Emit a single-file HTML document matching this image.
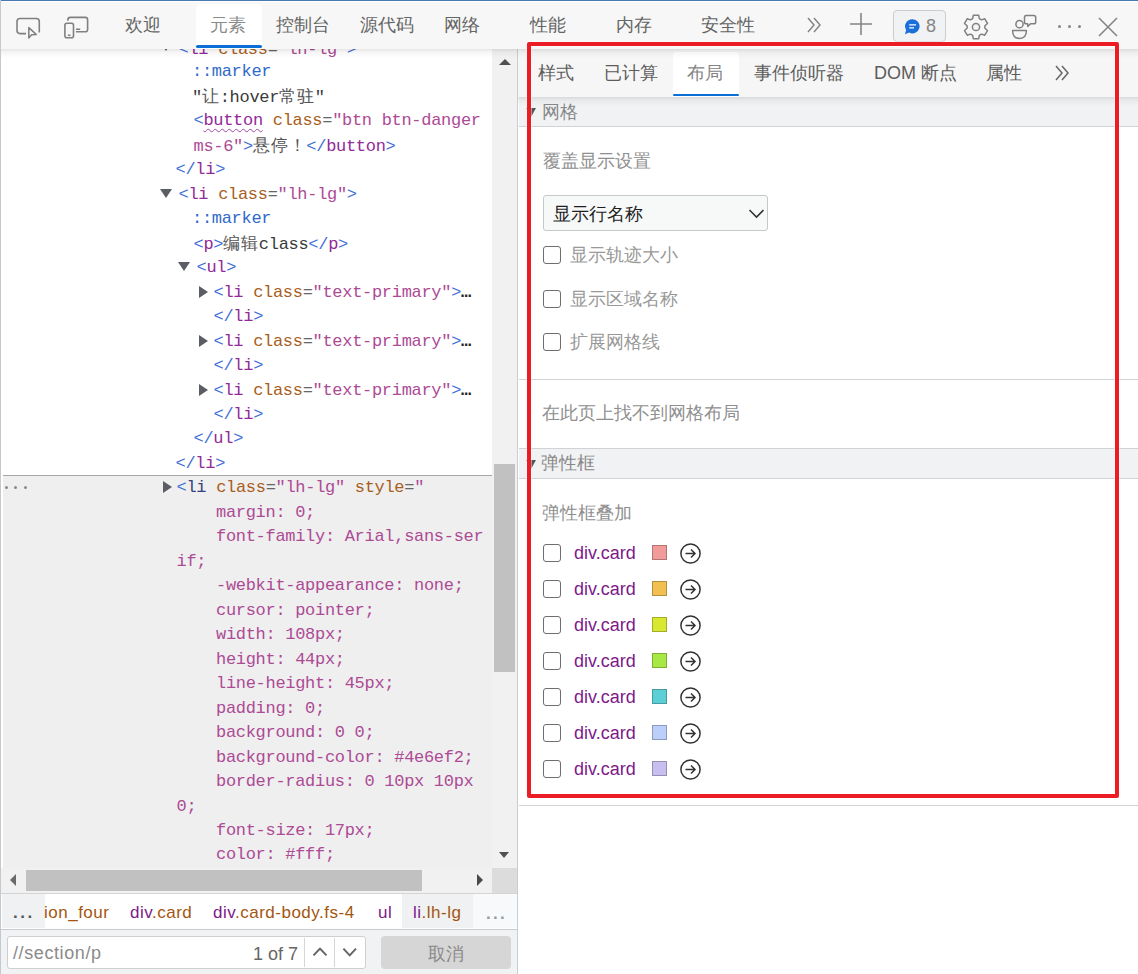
<!DOCTYPE html>
<html><head><meta charset="utf-8">
<style>
html,body{margin:0;padding:0}
body{width:1138px;height:974px;overflow:hidden;position:relative;background:#fff;font-family:"Liberation Sans",sans-serif;color:#333}
.abs{position:absolute}
/* toolbar */
#tb{position:absolute;left:0;top:0;width:1138px;height:49px;background:#f7f7f7;z-index:5}
.shade{position:absolute;height:9px;background:linear-gradient(rgba(0,0,0,0.10),rgba(0,0,0,0.04) 35%,rgba(0,0,0,0))}
#tb .topline{position:absolute;left:0;top:0;width:1138px;height:1px;background:#4a78b2}
#tb .topline2{position:absolute;left:0;top:1px;width:1138px;height:1px;background:#fff}
.ttab{position:absolute;top:13px;font-size:18px;line-height:24px;color:#656565;white-space:nowrap}
#acttab{position:absolute;left:196px;top:4px;width:66px;height:45px;background:#fff;border-radius:5px 5px 0 0}
#acttab .ul{position:absolute;left:0;right:0;bottom:1.5px;height:2.5px;background:#0b6fd6;border-radius:2px}
/* left border */
#lborder{position:absolute;left:0;top:0;width:1px;height:974px;background:#c4c9d1;z-index:6}
/* code */
#code{position:absolute;left:0;top:0;width:492px;height:868px;overflow:hidden;background:#fff}
.row{position:absolute;white-space:pre;font-family:"Liberation Mono",monospace;font-size:17px;letter-spacing:-0.3px;line-height:24px;height:24px;color:#333}
.el{color:#222;font-weight:bold}.b{color:#3f6fd6}.t{color:#922a98}.ts{color:#34427e}.a{color:#a85e1c}.v{color:#ad4a95}.e{color:#666}.x{color:#3a3a3a}.m{color:#3069cc}
.cj{font-family:"Liberation Sans",sans-serif;font-size:17px;letter-spacing:0.8px;color:#555}
.u{text-decoration:underline wavy #a048a8;text-decoration-thickness:1.2px;text-underline-offset:3px}
.tri-d{position:absolute;width:0;height:0;border-left:6px solid transparent;border-right:6px solid transparent;border-top:9px solid #5a5d63}
.tri-r{position:absolute;width:0;height:0;border-top:6px solid transparent;border-bottom:6px solid transparent;border-left:9.5px solid #5a5d63}
#selbg{position:absolute;left:3px;top:476px;width:489px;height:392px;background:#efefef}
#selline{position:absolute;left:3px;top:475px;width:489px;height:1px;background:#a6a6a6}
.dot{position:absolute;width:3px;height:3px;border-radius:50%;background:#8a8a8a}
/* scrollbars */
#vsb{position:absolute;left:492px;top:49px;width:25px;height:819px;background:#f1f1f1}
#vthumb{position:absolute;left:494px;top:464px;width:21px;height:208px;background:#c1c1c1}
#hsb{position:absolute;left:1px;top:868px;width:491px;height:25px;background:#f1f1f1}
#hthumb{position:absolute;left:26px;top:870px;width:396px;height:21px;background:#c1c1c1}
#corner{position:absolute;left:492px;top:868px;width:25px;height:25px;background:#dcdcdc}
/* breadcrumbs */
#bc{position:absolute;left:0;top:893px;width:517px;height:37px;background:#fff;border-top:1px solid #d4d4d4;border-bottom:1px solid #c8cbd0;box-sizing:border-box}
.crumb{position:absolute;top:900.7px;font-size:17px;line-height:24px;white-space:nowrap;letter-spacing:0.5px}
.cp{color:#7d1a8a}.cb{color:#a3560f}
/* search bar */
#sb{position:absolute;left:0;top:930px;width:517px;height:45px;background:#f1f2f4}
#sinput{position:absolute;left:7px;top:936px;width:359px;height:33px;box-sizing:border-box;border:1px solid #cfcfcf;border-radius:3px;background:#fff}
#cancel{position:absolute;left:381px;top:936px;width:130px;height:33px;background:#d6d6d6;border-radius:4px}
/* divider */
#divider{position:absolute;left:517px;top:49px;width:1px;height:925px;background:#c9ccd1}
/* right panel */
#rtabs{position:absolute;left:518px;top:49px;width:620px;height:48px;background:#f6f6f6;z-index:2}
.rtab{position:absolute;z-index:4;top:61px;font-size:18px;line-height:24px;color:#5c5c5c;white-space:nowrap}
#ractt{position:absolute;left:673px;top:52px;width:66px;height:45px;background:#fff;border-radius:4px 4px 0 0;z-index:3}
#ractt .ul{position:absolute;left:0;right:0;bottom:1px;height:2.5px;background:#0b6fd6;border-radius:2px}
.sech{position:absolute;left:519px;width:619px;background:#f1f2f4;box-sizing:border-box}
.sect{position:absolute;font-size:18px;line-height:24px;color:#888;white-space:nowrap}
.gray{position:absolute;font-size:18px;line-height:24px;color:#8f8f8f;white-space:nowrap}
.cb18{position:absolute;width:18px;height:18px;box-sizing:border-box;border:1.6px solid #6e6e6e;border-radius:3px;background:#fff}
.hline{position:absolute;left:519px;width:619px;height:1px;background:#cfd2d6}
#select{position:absolute;left:543px;top:195px;width:225px;height:36px;box-sizing:border-box;border:1px solid #c8c8c8;border-radius:3px;background:#f7f8f8}
.fc{position:absolute;font-size:18px;line-height:24px;color:#7d1a8a;white-space:nowrap}
.sw{position:absolute;width:15px;height:15px;box-sizing:border-box;border:1px solid rgba(0,0,0,0.25)}
.circ{position:absolute;width:21px;height:21px}
/* red box */
#red{position:absolute;left:526px;top:41px;width:594px;height:758px;box-sizing:border-box;border:1px solid rgba(255,255,255,0.45);border-radius:3px;z-index:20}
#red .in{position:absolute;left:0;top:0;right:0;bottom:0;border:4px solid #ec1c24;border-radius:2px}
#red .in2{position:absolute;left:4px;top:4px;right:4px;bottom:4px;border:1px solid rgba(255,255,255,0.45)}
</style></head><body>

<!-- LEFT: code tree -->
<div id="code">
<div id="selbg"></div>
<div id="selline"></div>
<div class="dot" style="left:5px;top:486px"></div>
<div class="dot" style="left:14px;top:486px"></div>
<div class="dot" style="left:24px;top:486px"></div>
<div class="row" style="top:37.50px;left:178.5px"><span class="b">&lt;</span><span class="t">li</span> <span class="a">class</span><span class="e">=</span><span class="v">&quot;lh-lg&quot;</span><span class="b">&gt;</span></div>
<div class="tri-d" style="top:41.80px;left:160px"></div>
<div class="row" style="top:60.47px;left:192px"><span class="m">::marker</span></div>
<div class="row" style="top:84.94px;left:192px"><span class="x">&quot;</span><span class="cj">让</span><span class="x">:hover</span><span class="cj">常驻</span><span class="x">&quot;</span></div>
<div class="row" style="top:109.40px;left:193.5px"><span class="b">&lt;</span><span class="t u">button</span> <span class="a">class</span><span class="e">=</span><span class="v">&quot;btn btn-danger</span></div>
<div class="row" style="top:133.87px;left:193.5px"><span class="v">ms-6&quot;</span><span class="b">&gt;</span><span class="cj">悬停！</span><span class="b">&lt;/</span><span class="t">button</span><span class="b">&gt;</span></div>
<div class="row" style="top:158.34px;left:175.5px"><span class="b">&lt;/</span><span class="t">li</span><span class="b">&gt;</span></div>
<div class="row" style="top:182.81px;left:178.5px"><span class="b">&lt;</span><span class="t">li</span> <span class="a">class</span><span class="e">=</span><span class="v">&quot;lh-lg&quot;</span><span class="b">&gt;</span></div>
<div class="tri-d" style="top:188.61px;left:160px"></div>
<div class="row" style="top:207.28px;left:192px"><span class="m">::marker</span></div>
<div class="row" style="top:231.74px;left:193.5px"><span class="b">&lt;</span><span class="t">p</span><span class="b">&gt;</span><span class="cj">编辑</span><span class="x">class</span><span class="b">&lt;/</span><span class="t">p</span><span class="b">&gt;</span></div>
<div class="row" style="top:256.21px;left:196.5px"><span class="b">&lt;</span><span class="t">ul</span><span class="b">&gt;</span></div>
<div class="tri-d" style="top:262.01px;left:178px"></div>
<div class="row" style="top:280.68px;left:213.5px"><span class="b">&lt;</span><span class="t">li</span> <span class="a">class</span><span class="e">=</span><span class="v">&quot;text-primary&quot;</span><span class="b">&gt;</span><span class="el">…</span></div>
<div class="tri-r" style="top:285.68px;left:199px"></div>
<div class="row" style="top:305.15px;left:213.5px"><span class="b">&lt;/</span><span class="t">li</span><span class="b">&gt;</span></div>
<div class="row" style="top:329.62px;left:213.5px"><span class="b">&lt;</span><span class="t">li</span> <span class="a">class</span><span class="e">=</span><span class="v">&quot;text-primary&quot;</span><span class="b">&gt;</span><span class="el">…</span></div>
<div class="tri-r" style="top:334.62px;left:199px"></div>
<div class="row" style="top:354.08px;left:213.5px"><span class="b">&lt;/</span><span class="t">li</span><span class="b">&gt;</span></div>
<div class="row" style="top:378.55px;left:213.5px"><span class="b">&lt;</span><span class="t">li</span> <span class="a">class</span><span class="e">=</span><span class="v">&quot;text-primary&quot;</span><span class="b">&gt;</span><span class="el">…</span></div>
<div class="tri-r" style="top:383.55px;left:199px"></div>
<div class="row" style="top:403.02px;left:213.5px"><span class="b">&lt;/</span><span class="t">li</span><span class="b">&gt;</span></div>
<div class="row" style="top:427.49px;left:193.5px"><span class="b">&lt;/</span><span class="t">ul</span><span class="b">&gt;</span></div>
<div class="row" style="top:451.96px;left:175.5px"><span class="b">&lt;/</span><span class="t">li</span><span class="b">&gt;</span></div>
<div class="row" style="top:476.42px;left:176.5px"><span class="b">&lt;</span><span class="ts">li</span> <span class="a">class</span><span class="e">=</span><span class="v">&quot;lh-lg&quot;</span> <span class="a">style</span><span class="e">=</span><span class="v">&quot;</span></div>
<div class="tri-r" style="top:481.42px;left:163px"></div>
<div class="row" style="top:500.89px;left:216.0px"><span class="v">margin: 0;</span></div>
<div class="row" style="top:525.36px;left:216.0px"><span class="v">font-family: Arial,sans-ser</span></div>
<div class="row" style="top:549.83px;left:176.5px"><span class="v">if;</span></div>
<div class="row" style="top:574.30px;left:216.0px"><span class="v">-webkit-appearance: none;</span></div>
<div class="row" style="top:598.76px;left:216.0px"><span class="v">cursor: pointer;</span></div>
<div class="row" style="top:623.23px;left:216.0px"><span class="v">width: 108px;</span></div>
<div class="row" style="top:647.70px;left:216.0px"><span class="v">height: 44px;</span></div>
<div class="row" style="top:672.17px;left:216.0px"><span class="v">line-height: 45px;</span></div>
<div class="row" style="top:696.64px;left:216.0px"><span class="v">padding: 0;</span></div>
<div class="row" style="top:721.10px;left:216.0px"><span class="v">background: 0 0;</span></div>
<div class="row" style="top:745.57px;left:216.0px"><span class="v">background-color: #4e6ef2;</span></div>
<div class="row" style="top:770.04px;left:216.0px"><span class="v">border-radius: 0 10px 10px</span></div>
<div class="row" style="top:794.51px;left:176.5px"><span class="v">0;</span></div>
<div class="row" style="top:818.98px;left:216.0px"><span class="v">font-size: 17px;</span></div>
<div class="row" style="top:843.44px;left:216.0px"><span class="v">color: #fff;</span></div>
</div>

<div id="vsb"></div>
<div id="vthumb"></div>
<div class="abs" style="left:499px;top:59px;width:0;height:0;border-left:6px solid transparent;border-right:6px solid transparent;border-bottom:6px solid #505050"></div>
<div class="abs" style="left:499px;top:852px;width:0;height:0;border-left:5.5px solid transparent;border-right:5.5px solid transparent;border-top:6px solid #505050"></div>
<div id="hsb"></div>
<div id="hthumb"></div>
<div id="corner"></div>
<div class="abs" style="left:10px;top:874px;width:0;height:0;border-top:6px solid transparent;border-bottom:6px solid transparent;border-right:6px solid #6a6a6a"></div>
<div class="abs" style="left:477px;top:874px;width:0;height:0;border-top:6px solid transparent;border-bottom:6px solid transparent;border-left:6px solid #4a4a4a"></div>

<!-- breadcrumbs -->
<div id="bc"></div>
<div class="abs" style="left:2px;top:894px;width:43px;height:34px;background:#f0f1f3"></div>
<div class="abs" style="left:402px;top:894px;width:71px;height:34px;background:#f0f1f3"></div>
<div class="abs" style="left:473px;top:894px;width:44px;height:34px;background:#f8f9fa"></div>
<div class="crumb" style="left:13px;top:901px;color:#555;font-weight:bold;letter-spacing:2.5px">...</div>
<div class="crumb cb" style="left:44px">ion_four</div>
<div class="crumb" style="left:130px"><span class="cp">div</span><span class="cb">.card</span></div>
<div class="crumb" style="left:213px"><span class="cp">div</span><span class="cb">.card-body.fs-4</span></div>
<div class="crumb cp" style="left:378px">ul</div>
<div class="crumb" style="left:413px"><span class="cp">li</span><span class="cb">.lh-lg</span></div>
<div class="crumb" style="left:486px;top:902px;color:#9a9a9a;font-weight:bold;letter-spacing:2.3px">...</div>

<!-- search -->
<div id="sb"></div>
<div id="sinput"></div>
<div class="abs" style="left:13px;top:941px;font-size:18px;line-height:24px;color:#8a8a8a;letter-spacing:0.6px">//section/p</div>
<div class="abs" style="left:253px;top:941.5px;font-size:18px;line-height:24px;color:#666">1 of 7</div>
<div class="abs" style="left:304px;top:938px;width:1px;height:29px;background:#d6d6d6"></div>
<div class="abs" style="left:334px;top:938px;width:1px;height:29px;background:#d6d6d6"></div>
<svg class="abs" style="left:310px;top:945px" width="20" height="14" viewBox="0 0 20 14"><path d="M3.5 10.4 L10 3.6 L16.5 10.4" fill="none" stroke="#666" stroke-width="2"/></svg>
<svg class="abs" style="left:340px;top:945px" width="20" height="14" viewBox="0 0 20 14"><path d="M3.4 3.6 L9.7 10.4 L16 3.6" fill="none" stroke="#666" stroke-width="2"/></svg>
<div id="cancel"></div>
<div class="abs" style="left:428px;top:942px;font-size:18px;line-height:24px;color:#8a8a8a">取消</div>

<div id="divider"></div>

<!-- RIGHT panel -->
<div id="rtabs"></div>
<div id="ractt"><div class="ul"></div></div>
<div class="rtab" style="left:538px">样式</div>
<div class="rtab" style="left:604px">已计算</div>
<div class="rtab" style="left:687px;color:#858585">布局</div>
<div class="rtab" style="left:754px">事件侦听器</div>
<div class="rtab" style="left:874px">DOM 断点</div>
<div class="rtab" style="left:986px">属性</div>
<svg class="abs" style="left:1054px;top:64px;z-index:4" width="16" height="18" viewBox="0 0 16 18"><path d="M2 2 L8 9 L2 16 M8 2 L14 9 L8 16" fill="none" stroke="#666" stroke-width="1.5"/></svg>

<div class="sech" style="top:97px;height:30px;border-bottom:1px solid #cfd2d6"></div>
<div class="abs" style="left:526px;top:108px;width:0;height:0;border-left:5.8px solid transparent;border-right:5.8px solid transparent;border-top:9.5px solid #555"></div>
<div class="sect" style="left:542px;top:100px">网格</div>

<div class="gray" style="left:543px;top:149px">覆盖显示设置</div>
<div id="select"></div>
<div class="abs" style="left:553px;top:202px;font-size:18px;line-height:24px;color:#1e1e1e">显示行名称</div>
<svg class="abs" style="left:748px;top:207px" width="17" height="12" viewBox="0 0 17 12"><path d="M1.5 3 L8.5 10 L15.5 3" fill="none" stroke="#333" stroke-width="1.6"/></svg>

<div class="cb18" style="left:543px;top:246px"></div>
<div class="gray" style="left:570px;top:243px;color:#999">显示轨迹大小</div>
<div class="cb18" style="left:543px;top:290px"></div>
<div class="gray" style="left:570px;top:287px;color:#999">显示区域名称</div>
<div class="cb18" style="left:543px;top:333px"></div>
<div class="gray" style="left:570px;top:330px;color:#999">扩展网格线</div>

<div class="hline" style="top:379px"></div>
<div class="gray" style="left:542px;top:401px">在此页上找不到网格布局</div>

<div class="sech" style="top:448px;height:31px;border-top:1px solid #cfd2d6;border-bottom:1px solid #cfd2d6"></div>
<div class="abs" style="left:526px;top:460px;width:0;height:0;border-left:5.8px solid transparent;border-right:5.8px solid transparent;border-top:9.5px solid #555"></div>
<div class="sect" style="left:541px;top:451px">弹性框</div>

<div class="gray" style="left:542px;top:501px">弹性框叠加</div>

<div class="cb18" style="left:543px;top:544px"></div>
<div class="fc" style="left:574px;top:541px">div.card</div>
<div class="sw" style="left:652px;top:545px;background:#f29b9b"></div>
<svg class="circ" style="left:680px;top:543px" viewBox="0 0 21 21"><circle cx="10.5" cy="10.5" r="9.6" fill="none" stroke="#333" stroke-width="1.5"/><path d="M5.5 10.5 H15 M11 6.5 L15 10.5 L11 14.5" fill="none" stroke="#333" stroke-width="1.5"/></svg>
<div class="cb18" style="left:543px;top:580px"></div>
<div class="fc" style="left:574px;top:577px">div.card</div>
<div class="sw" style="left:652px;top:581px;background:#f2c050"></div>
<svg class="circ" style="left:680px;top:579px" viewBox="0 0 21 21"><circle cx="10.5" cy="10.5" r="9.6" fill="none" stroke="#333" stroke-width="1.5"/><path d="M5.5 10.5 H15 M11 6.5 L15 10.5 L11 14.5" fill="none" stroke="#333" stroke-width="1.5"/></svg>
<div class="cb18" style="left:543px;top:616px"></div>
<div class="fc" style="left:574px;top:613px">div.card</div>
<div class="sw" style="left:652px;top:617px;background:#d8e830"></div>
<svg class="circ" style="left:680px;top:615px" viewBox="0 0 21 21"><circle cx="10.5" cy="10.5" r="9.6" fill="none" stroke="#333" stroke-width="1.5"/><path d="M5.5 10.5 H15 M11 6.5 L15 10.5 L11 14.5" fill="none" stroke="#333" stroke-width="1.5"/></svg>
<div class="cb18" style="left:543px;top:652px"></div>
<div class="fc" style="left:574px;top:649px">div.card</div>
<div class="sw" style="left:652px;top:653px;background:#a8e844"></div>
<svg class="circ" style="left:680px;top:651px" viewBox="0 0 21 21"><circle cx="10.5" cy="10.5" r="9.6" fill="none" stroke="#333" stroke-width="1.5"/><path d="M5.5 10.5 H15 M11 6.5 L15 10.5 L11 14.5" fill="none" stroke="#333" stroke-width="1.5"/></svg>
<div class="cb18" style="left:543px;top:688px"></div>
<div class="fc" style="left:574px;top:685px">div.card</div>
<div class="sw" style="left:652px;top:689px;background:#5ccfd6"></div>
<svg class="circ" style="left:680px;top:687px" viewBox="0 0 21 21"><circle cx="10.5" cy="10.5" r="9.6" fill="none" stroke="#333" stroke-width="1.5"/><path d="M5.5 10.5 H15 M11 6.5 L15 10.5 L11 14.5" fill="none" stroke="#333" stroke-width="1.5"/></svg>
<div class="cb18" style="left:543px;top:724px"></div>
<div class="fc" style="left:574px;top:721px">div.card</div>
<div class="sw" style="left:652px;top:725px;background:#bccefa"></div>
<svg class="circ" style="left:680px;top:723px" viewBox="0 0 21 21"><circle cx="10.5" cy="10.5" r="9.6" fill="none" stroke="#333" stroke-width="1.5"/><path d="M5.5 10.5 H15 M11 6.5 L15 10.5 L11 14.5" fill="none" stroke="#333" stroke-width="1.5"/></svg>
<div class="cb18" style="left:543px;top:760px"></div>
<div class="fc" style="left:574px;top:757px">div.card</div>
<div class="sw" style="left:652px;top:761px;background:#c8bff0"></div>
<svg class="circ" style="left:680px;top:759px" viewBox="0 0 21 21"><circle cx="10.5" cy="10.5" r="9.6" fill="none" stroke="#333" stroke-width="1.5"/><path d="M5.5 10.5 H15 M11 6.5 L15 10.5 L11 14.5" fill="none" stroke="#333" stroke-width="1.5"/></svg>

<div class="hline" style="top:805px"></div>

<!-- toolbar (on top) -->
<div id="tb">
<div class="topline"></div><div class="topline2"></div>
<div id="acttab"><div class="ul"></div></div>
<svg class="abs" style="left:10px;top:10px" width="34" height="32" viewBox="0 0 34 32"><path d="M16 23.6 H10 Q7 23.6 7 20.6 V11.5 Q7 8.5 10 8.5 H26.3 Q29.3 8.5 29.3 11.5 V22.5" fill="none" stroke="#808080" stroke-width="1.6"/><path d="M18.8 17.6 L26.2 24.4 L21.6 24.8 L18.8 28 Z" fill="none" stroke="#808080" stroke-width="1.5" stroke-linejoin="round"/></svg>
<svg class="abs" style="left:60px;top:10px" width="32" height="32" viewBox="0 0 32 32"><path d="M7.9 10.8 V9.7 Q7.9 7.4 10.2 7.4 H25.3 Q27.6 7.4 27.6 9.7 V19.4 Q27.6 21.7 25.3 21.7 H16" fill="none" stroke="#808080" stroke-width="1.6"/><rect x="4.9" y="13.3" width="8.6" height="14.4" rx="2" fill="none" stroke="#808080" stroke-width="1.6"/><path d="M7.9 25.2 H10.5 M16 19.3 H20.2" stroke="#808080" stroke-width="1.5"/></svg>
<div class="ttab" style="left:125px">欢迎</div>
<div class="ttab" style="left:210px;color:#8a8a8a">元素</div>
<div class="ttab" style="left:276px">控制台</div>
<div class="ttab" style="left:360px">源代码</div>
<div class="ttab" style="left:444px">网络</div>
<div class="ttab" style="left:530px">性能</div>
<div class="ttab" style="left:616px">内存</div>
<div class="ttab" style="left:701px">安全性</div>
<svg class="abs" style="left:806px;top:16px" width="16" height="18" viewBox="0 0 16 18"><path d="M2 2 L8 9 L2 16 M8 2 L14 9 L8 16" fill="none" stroke="#858585" stroke-width="1.5"/></svg>
<svg class="abs" style="left:849px;top:12px" width="24" height="24" viewBox="0 0 24 24"><path d="M12 1 V23 M1 12 H23" stroke="#858585" stroke-width="1.6"/></svg>
<div class="abs" style="left:893px;top:10px;width:53px;height:32px;box-sizing:border-box;border:1px solid #cacccf;border-radius:4px;background:#f1f2f3"></div>
<svg class="abs" style="left:903px;top:19px" width="18" height="16" viewBox="0 0 18 16"><path d="M9.6 0.2 A7.1 7.1 0 1 1 6.2 13.6 L1.9 15.2 L3.2 11.1 A7.1 7.1 0 0 1 9.6 0.2 Z" fill="#1a6fd8"/><path d="M6.2 5.9 H13 M6.2 8.9 H11" stroke="#fff" stroke-width="1.4"/></svg>
<div class="abs" style="left:926px;top:14px;font-size:18px;line-height:24px;color:#858585">8</div>
<svg class="abs" style="left:962px;top:13px" width="28" height="28" viewBox="0 0 28 28"><path fill="none" stroke="#808080" stroke-width="1.5" stroke-linejoin="round" d="M10.63 5.66 L11.30 2.31 L16.70 2.31 L17.37 5.66 L19.54 6.91 L22.78 5.82 L25.48 10.49 L22.91 12.75 L22.91 15.25 L25.48 17.51 L22.78 22.18 L19.54 21.09 L17.37 22.34 L16.70 25.69 L11.30 25.69 L10.63 22.34 L8.46 21.09 L5.22 22.18 L2.52 17.51 L5.09 15.25 L5.09 12.75 L2.52 10.49 L5.22 5.82 L8.46 6.91 Z"/><circle cx="14" cy="14" r="3.6" fill="none" stroke="#808080" stroke-width="1.5"/></svg>
<svg class="abs" style="left:1010px;top:13px" width="28" height="28" viewBox="0 0 28 28"><circle cx="9.5" cy="11.2" r="3.6" fill="none" stroke="#808080" stroke-width="1.5"/><path d="M2.6 17.5 H16.4 Q16.4 25.4 9.5 25.4 Q2.6 25.4 2.6 17.5 Z" fill="none" stroke="#808080" stroke-width="1.5" stroke-linejoin="round"/><path d="M16 2.5 H23.8 Q25.7 2.5 25.7 4.4 V8.9 Q25.7 10.8 23.8 10.8 H20.5 L17.8 13.5 L17.6 10.8 H16 Q14.5 10.8 14.5 8.9 V4.4 Q14.5 2.5 16 2.5 Z" fill="none" stroke="#808080" stroke-width="1.5" stroke-linejoin="round"/></svg>
<div class="abs" style="left:1057.5px;top:24.5px;width:3.6px;height:3.6px;border-radius:50%;background:#858585"></div>
<div class="abs" style="left:1067.5px;top:24.5px;width:3.6px;height:3.6px;border-radius:50%;background:#858585"></div>
<div class="abs" style="left:1077.5px;top:24.5px;width:3.6px;height:3.6px;border-radius:50%;background:#858585"></div>
<svg class="abs" style="left:1098px;top:17px" width="20" height="20" viewBox="0 0 20 20"><path d="M1 1 L19 19 M19 1 L1 19" stroke="#858585" stroke-width="1.6"/></svg>
</div>
<div id="lborder"></div>
<div class="shade" style="left:0;top:49px;width:1138px;z-index:5"></div>
<div class="shade" style="left:518px;top:97px;width:620px;z-index:5"></div>

<div id="red"><div class="in"></div><div class="in2"></div></div>
</body></html>
